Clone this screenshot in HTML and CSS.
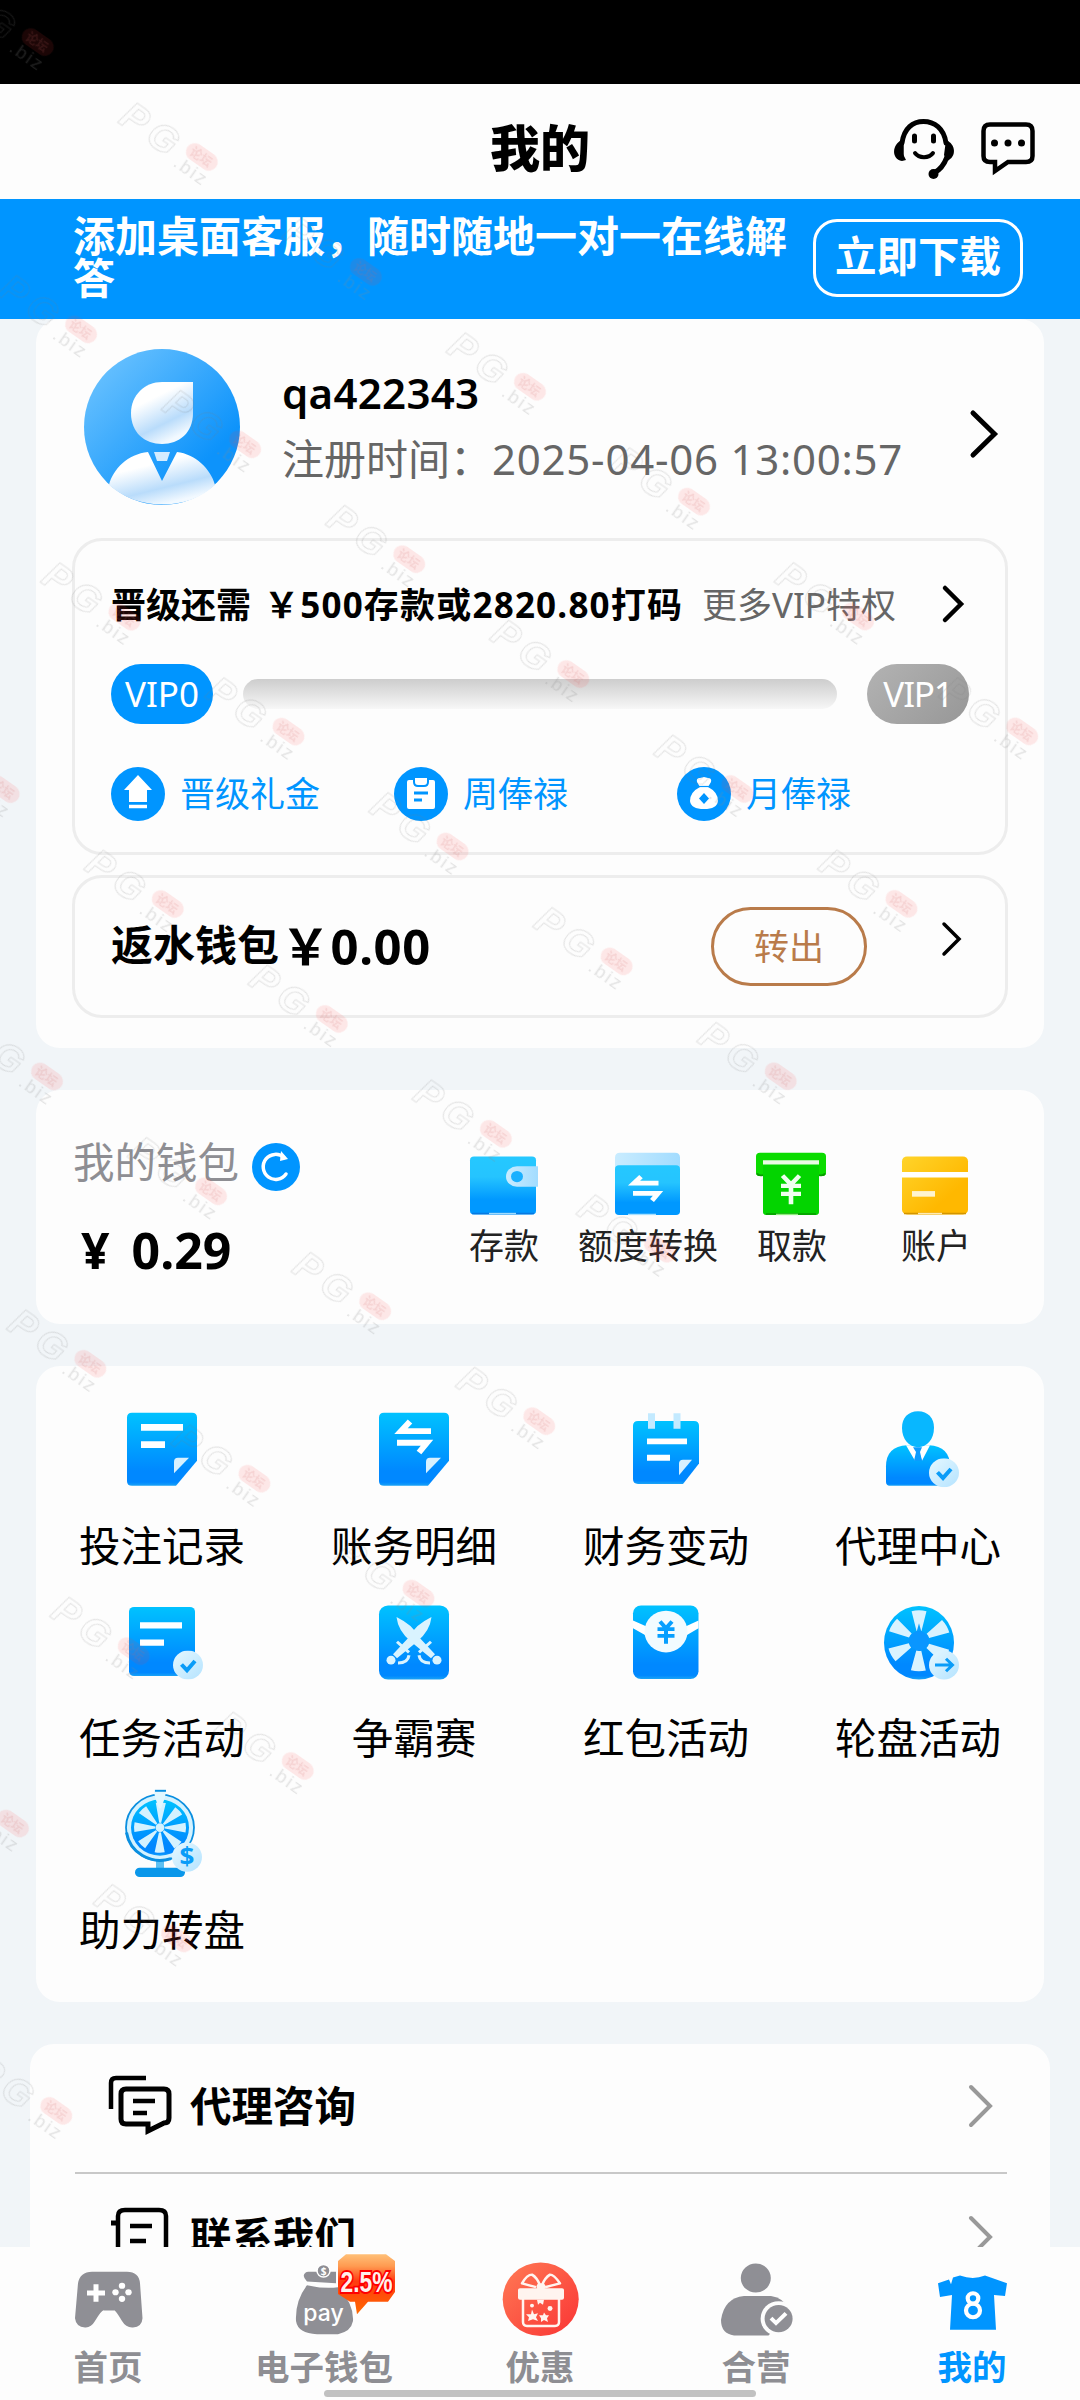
FILE: index.html
```html
<!DOCTYPE html>
<html lang="zh-CN">
<head>
<meta charset="utf-8">
<title>我的</title>
<link rel="stylesheet" href="styles.css">
</head>
<body>
<svg class="defs" width="0" height="0">
  <defs>
    <linearGradient id="blue" x1="0" y1="0" x2="0" y2="1"><stop offset="0" stop-color="#00c2ff"/><stop offset=".8" stop-color="#0088ff"/><stop offset=".95" stop-color="#0088ff"/><stop offset="1" stop-color="#1ba4f5"/></linearGradient>
    <linearGradient id="purse" x1="0" y1="0" x2="0" y2="1"><stop offset="0" stop-color="#25c8ff"/><stop offset=".35" stop-color="#25c4ff"/><stop offset=".75" stop-color="#0098ff"/><stop offset="1" stop-color="#0098ff"/></linearGradient>
    <linearGradient id="pale" x1="0" y1="0" x2="1" y2="1"><stop offset="0" stop-color="#e6f8ff"/><stop offset="1" stop-color="#b4e3ff"/></linearGradient>
    <linearGradient id="lid" x1="0" y1="0" x2="1" y2="0"><stop offset="0" stop-color="#c9ecff"/><stop offset="1" stop-color="#a2dcff"/></linearGradient>
    <linearGradient id="gold" x1="0" y1="0" x2="1" y2="1"><stop offset="0" stop-color="#ffd42a"/><stop offset=".7" stop-color="#ffb800"/></linearGradient>
    <linearGradient id="red" x1="0" y1="0" x2="1" y2="1"><stop offset="0" stop-color="#ff7a55"/><stop offset="1" stop-color="#fa3434"/></linearGradient>
    <linearGradient id="tag" x1="0" y1="0" x2="0" y2="1"><stop offset="0" stop-color="#ffc078"/><stop offset=".2" stop-color="#ff9a50"/><stop offset=".45" stop-color="#ff3a10"/><stop offset="1" stop-color="#ff6a00"/></linearGradient>
    <linearGradient id="face" x1="0" y1="0" x2="1" y2="1"><stop offset="0" stop-color="#76c8ff"/><stop offset=".75" stop-color="#0d93fb"/></linearGradient>
    <linearGradient id="skin" x1="0" y1="0" x2=".5" y2="1"><stop offset=".35" stop-color="#fff"/><stop offset=".75" stop-color="#b9dcfb"/><stop offset="1" stop-color="#f2f9ff"/></linearGradient>
    <symbol id="tick" viewBox="0 0 30 30"><circle cx="15" cy="15" r="15" fill="url(#pale)"/><path d="M8.500 14.500L14 20.500L22 11" fill="none" stroke="#0a9cf8" stroke-width="4"/></symbol>
  </defs>
</svg>
<div class="screen">
  <div class="status"></div>
  <header class="header">
    <h1>我的</h1>
    <div class="tools">
      <svg width="60" height="60" viewBox="0 0 60 60"><g fill="none" stroke="#000" stroke-linecap="round"><path d="M8 24C10 9 19 2.500 29.500 2.500S50 9 52 24" stroke-width="5"/><path d="M8 24V39" stroke-width="3.500"/><path d="M53 38C50 46 46 51 40 54" stroke-width="5"/><path d="M20.500 17v5M39.500 17v5" stroke-width="5"/><path d="M21 34C25 39.500 35 39.500 39 34" stroke-width="4"/></g><path d="M8 21C-2 25 -3 40 8 42L12 41L9 35ZM52 21C62 25 63 38 53 42L50 36Z"/><circle cx="39.500" cy="55" r="5"/></svg>
      <svg width="54" height="54" viewBox="0 0 54 54"><path d="M9 2.500H45Q51.500 2.500 51.500 9V34Q51.500 40 45 40H27L14 49V40H9Q2.500 40 2.500 34V9Q2.500 2.500 9 2.500Z" fill="none" stroke="#000" stroke-width="4.500"/><circle cx="13.500" cy="21" r="3.500"/><circle cx="27" cy="21" r="3.500"/><circle cx="40.500" cy="21" r="3.500"/></svg>
    </div>
  </header>
  <section class="banner">
    <p>添加桌面客服，随时随地一对一在线解答</p>
    <button class="download">立即下载</button>
  </section>

  <main class="content">
    <section class="card account">
      <div class="profile">
        <svg class="avatar" width="156" height="156" viewBox="0 0 156 156"><circle cx="78" cy="78" r="78" fill="url(#face)"/><path d="M78 33H109V64C109 84 95 95 78 95C61 95 47 84 47 64C47 46 61 33 78 33Z" fill="url(#skin)"/><path d="M64 103C44 105 29 120 25 136C54 162 104 162 131 136C127 120 111 105 93 103L78 132Z" fill="url(#skin)"/><path d="M70 103H86L83 112H73Z" fill="#d5ecff"/></svg>
        <div class="who"><div class="name">qa422343</div><div class="since">注册时间：<span class="date">2025-04-06 13:00:57</span></div></div>
        <svg class="arrow" width="28" height="48" viewBox="0 0 28 48"><path d="M3 3L24.500 24L3 45" fill="none" stroke="#000" stroke-width="5" stroke-linecap="round"/></svg>
      </div>
      <div class="panel vip">
        <div class="need"><b class="need-a">晋级还需</b><b class="need-b">￥500存款或2820.80打码</b><span class="more">更多VIP特权</span><svg width="22" height="38" viewBox="0 0 22 38"><path d="M3 3L19 19L3 35" fill="none" stroke="#000" stroke-width="4.500" stroke-linecap="round"/></svg></div>
        <div class="levels"><span class="pill">VIP0</span><span class="bar"></span><span class="pill off">VIP1</span></div>
        <div class="gifts">
          <div><svg width="54" height="54" viewBox="0 0 54 54"><circle cx="27" cy="27" r="27" fill="#0095ff"/><path d="M27 8L41 23H36V35H18V23H13Z" fill="#fff"/><path d="M18 39.500H36" stroke="#fff" stroke-width="3.500"/></svg>晋级礼金</div>
          <div><svg width="54" height="54" viewBox="0 0 54 54"><circle cx="27" cy="27" r="27" fill="#0095ff"/><rect x="13" y="13" width="28" height="29" rx="2" fill="#fff"/><path d="M20 10H34V15Q34 19 30 19H24Q20 19 20 15Z" fill="#fff" stroke="#0095ff" stroke-width="2"/><path d="M20 26H34M20 33H28" stroke="#0095ff" stroke-width="3"/></svg>周俸禄</div>
          <div><svg width="54" height="54" viewBox="0 0 54 54"><circle cx="27" cy="27" r="27" fill="#0095ff"/><path d="M23 20L20 15Q19 11 23 11L27 10L31 11Q35 11 34 15L31 20Q41 25 41 34Q40 42 27 42Q14 42 13 34Q13 25 23 20Z" fill="#fff"/><path d="M27 26L32 31.500L27 37L22 31.500Z" fill="#0095ff"/><path d="M22 19.500H32" stroke="#0095ff" stroke-width="1.200"/></svg>月俸禄</div>
        </div>
      </div>
      <div class="panel rebate">
        <b class="rebate-name">返水钱包</b><b class="rebate-sum">￥0.00</b>
        <button class="out">转出</button>
        <svg width="20" height="34" viewBox="0 0 20 34"><path d="M2 2L17 17L2 32" fill="none" stroke="#000" stroke-width="3.500" stroke-linecap="round"/></svg>
      </div>
    </section>

    <section class="card wallet">
      <div class="balance">
        <div class="balance-name">我的钱包<svg width="48" height="48" viewBox="0 0 48 48"><circle cx="24" cy="24" r="24" fill="#0095ff"/><path d="M34 31A12.500 12.500 0 1 1 32 14.500" fill="none" stroke="#fff" stroke-width="3.500" stroke-linecap="round"/><path d="M29 8L36 16L28 18Z" fill="#fff"/></svg></div>
        <div class="balance-sum"><span>¥</span><span>0.29</span></div>
      </div>
      <div class="quick">
        <div><svg width="76" height="72" viewBox="0 0 76 72"><rect x="4" y="8" width="66" height="62" rx="4" fill="url(#purse)"/><path d="M6 69H68" stroke="#0878e0" stroke-width="1.500"/><path d="M23 69H50" stroke="#9fdcff" stroke-width="1.500"/><path d="M51 18.500H72V40.500H51A11 11 0 0 1 51 18.500Z" fill="url(#lid)"/><circle cx="51" cy="29.500" r="6" fill="#1ab0ff"/></svg>存款</div>
        <div><svg width="76" height="72" viewBox="0 0 76 72"><path d="M5 20V9Q5 4 10 4H65Q70 4 70 9V20Z" fill="url(#lid)"/><rect x="5" y="17.500" width="65" height="53" rx="4" fill="url(#purse)"/><path d="M18 70H46" stroke="#a6e0ff" stroke-width="1.500"/><path d="M48.500 36.500H24L31 29.500M23 47.500H48L42 55" fill="none" stroke="#fff" stroke-width="5"/></svg>额度转换</div>
        <div><svg width="76" height="72" viewBox="0 0 76 72"><rect x="2" y="4" width="70" height="25" rx="4" fill="#0bdc00"/><path d="M3 26Q4 29 9 28M71 26Q70 29 65 28" fill="none" stroke="#089b00" stroke-width="2"/><rect x="9" y="16" width="56" height="54.500" rx="3" fill="#03d400"/><path d="M9 12H65V16.500H9Z" fill="#e9fbe5"/><path d="M12 69.500H62" stroke="#06a800" stroke-width="2"/><path d="M22 70H44" stroke="#8ded7c" stroke-width="1.500"/><path d="M28.500 28.500L37 38L45.500 28.500M27 39.500H47M27 48H47M37 38V59" fill="none" stroke="#effff0" stroke-width="4.600"/></svg>取款</div>
        <div><svg width="76" height="72" viewBox="0 0 76 72"><rect x="4" y="8" width="66" height="62" rx="5" fill="url(#gold)"/><path d="M6 69H68" stroke="#d29500" stroke-width="1.500"/><path d="M20 69H44" stroke="#ffeab0" stroke-width="1.500"/><path d="M4 27.500H70" stroke="#fff" stroke-width="6"/><path d="M14 48H37" stroke="#fff4ce" stroke-width="6"/></svg>账户</div>
      </div>
    </section>

    <section class="card menu">
      <div><svg width="90" height="96" viewBox="0 0 90 96"><path d="M15 10.500H75Q80 10.500 80 15.500V60L59 86H15Q10 86 10 81V15.500Q10 10.500 15 10.500Z" fill="url(#blue)"/><path d="M24 25.500H66M24 43.500H48" stroke="#fff" stroke-width="7"/><path d="M57 73V61Q57 57 61 57H72Z" fill="#d8f1ff"/></svg>投注记录</div>
      <div><svg width="90" height="96" viewBox="0 0 90 96"><path d="M15 10.500H75Q80 10.500 80 15.500V60L59 86H15Q10 86 10 81V15.500Q10 10.500 15 10.500Z" fill="url(#blue)"/><path d="M62 29.500H32L41 19.500M28 41.500H58L50 51.500" fill="none" stroke="#fff" stroke-width="6"/><path d="M57 73V61Q57 57 61 57H72Z" fill="#d8f1ff"/></svg>账务明细</div>
      <div><svg width="90" height="96" viewBox="0 0 90 96"><path d="M17 19H73Q78 19 78 24V63L62 84H17Q12 84 12 79V24Q12 19 17 19Z" fill="url(#blue)"/><path d="M30.500 11V27M56 11V27" stroke="#c3eaff" stroke-width="7"/><path d="M26 40H66M26 57H49" stroke="#fff" stroke-width="6"/><path d="M58 75V63Q58 59 62 59H71Z" fill="#d8f1ff"/></svg>财务变动</div>
      <div><svg width="90" height="96" viewBox="0 0 90 96"><path d="M13 82V66Q13 45 34 44H56Q77 45 77 66V86H18Q13 86 13 82Z" fill="url(#blue)"/><path d="M33 44L42 60L45 48L49 60L57 44Z" fill="#fff"/><path d="M40 46H49L47 51L49 60H41L43 51Z" fill="#0b9bff"/><path d="M45 9C55 9 61 16 61 26C61 38 54 46 45 46C36 46 29 38 29 26C29 16 35 9 45 9Z" fill="#08b7ff"/><use href="#tick" x="56" y="57.500" width="30" height="30"/></svg>代理中心</div>
      <div class="row-b"><svg width="90" height="96" viewBox="0 0 90 96"><rect x="12" y="19" width="66" height="71.500" rx="5" fill="url(#blue)"/><path d="M23 38H65M23 56H47" stroke="#fff" stroke-width="6.500"/><use href="#tick" x="56" y="64" width="30" height="30"/></svg>任务活动</div>
      <div class="row-b"><svg width="90" height="96" viewBox="0 0 90 96"><rect x="10" y="17.500" width="70" height="76.500" rx="9" fill="url(#blue)"/><g id="sword" fill="#d9f3ff" stroke="#d9f3ff"><path d="M27.500 29.500Q44 38 48 48L66 68L62 72L42 55Q29 44 27.500 29.500Z" stroke="none"/><path d="M50 69Q51 77 61 77M62 55L50 66" fill="none" stroke-width="3"/><circle cx="68" cy="74" r="4.500" stroke="none"/></g><use href="#sword" transform="matrix(-1 0 0 1 90 0)"/></svg>争霸赛</div>
      <div class="row-b"><svg width="90" height="96" viewBox="0 0 90 96"><rect x="12" y="17.500" width="65.500" height="76" rx="8" fill="url(#blue)"/><path d="M12 33L25 39Q33 35 45 35T65 39L77.500 33V41L66 48H24L12 41Z" fill="#fff"/><circle cx="45" cy="44.500" r="21.500" fill="#f2fbff"/><path d="M39 34L45 41L51 34M36.500 42H53.500M36.500 49H53.500M45 41V57" fill="none" stroke="#079fff" stroke-width="4"/></svg>红包活动</div>
      <div class="row-b"><svg width="90" height="96" viewBox="0 0 90 96"><ellipse cx="46" cy="56" rx="35" ry="38" fill="url(#blue)"/><circle cx="46" cy="54" r="21" fill="none" stroke="#d9f3ff" stroke-width="21" stroke-dasharray="10 11.990" transform="rotate(-103.600 46 54)"/><path d="M46 36L49 47H43Z" fill="#079fff"/><circle cx="46" cy="54" r="10" fill="#0a96ff"/><circle cx="71" cy="79" r="15" fill="url(#pale)"/><path d="M62 79H79M73 72.500L79.500 79L73 85.500" fill="none" stroke="#0a9cf8" stroke-width="3"/></svg>轮盘活动</div>
      <div class="row-c"><svg width="90" height="96" viewBox="0 0 90 96"><path d="M43 74V88" stroke="#5ec0f2" stroke-width="8"/><rect x="18" y="85.500" width="50" height="9.500" rx="4.700" fill="#0a97ea"/><circle cx="43" cy="44" r="34" fill="#d4f2ff" stroke="#0b8fe0" stroke-width="1.800"/><path d="M9.500 49A34 34 0 0 0 54 76" fill="none" stroke="#0b8fe0" stroke-width="3"/><circle cx="43" cy="44" r="29" fill="url(#blue)"/><circle cx="43" cy="44" r="15.500" fill="none" stroke="#d4f2ff" stroke-width="21" stroke-dasharray="6 6.174" transform="rotate(-11 43 44)"/><circle cx="43" cy="44" r="4.500" fill="#d4f2ff"/><path d="M37 5H49L48 13L44 24H42L38 13Z" fill="#e2f7ff"/><path d="M38 6H49" stroke="#0b8fe0" stroke-width="2"/><circle cx="70" cy="74.500" r="15" fill="url(#pale)"/><text class="dollar" x="70" y="83" text-anchor="middle">$</text></svg>助力转盘</div>
    </section>

    <section class="card links">
      <div class="link"><svg class="link-icon" width="66" height="62" viewBox="0 0 66 62"><path d="M3 34V8Q3 3 8 3H38" fill="none" stroke="#000" stroke-width="4.500"/><path d="M18 14H56Q61 14 61 19V43Q61 48 56 48L40 56V49H18Q13 49 13 44V19Q13 14 18 14Z" fill="none" stroke="#000" stroke-width="5"/><path d="M25 26H47M25 38H39" stroke="#000" stroke-width="4.500"/></svg><b>代理咨询</b><svg width="24" height="42" viewBox="0 0 24 42"><path d="M2 2L21 21L2 40" fill="none" stroke="#999" stroke-width="4" stroke-linecap="round"/></svg></div>
      <div class="link"><svg class="link-icon" width="66" height="62" viewBox="0 0 66 62"><path d="M17 4H51Q58 4 58 10V58H10V10Q10 4 17 4Z" fill="none" stroke="#000" stroke-width="4.500"/><path d="M3 17H10M3 44H10" stroke="#000" stroke-width="5"/><path d="M22 20H44M22 35H38" stroke="#000" stroke-width="4.500"/></svg><b>联系我们</b><svg width="24" height="42" viewBox="0 0 24 42"><path d="M2 2L21 21L2 40" fill="none" stroke="#999" stroke-width="4" stroke-linecap="round"/></svg></div>
    </section>
  </main>

  <nav class="nav">
    <div><svg width="80" height="80" viewBox="0 0 80 80"><path d="M24 15H59Q71 15 72 27L74.500 63Q74 72 65 72.500Q58 73 54 66Q47 54 46 55H36Q34 54 27 66Q23 73 17 72.500Q8 72 7 63L10 27Q12 15 24 15Z" fill="#8f8f95"/><path d="M19 37H37M28 28V46" stroke="#fff" stroke-width="5"/><g fill="#fff"><circle cx="54" cy="29.500" r="3.200"/><circle cx="54" cy="43" r="3.200"/><circle cx="47.500" cy="36.200" r="3.200"/><circle cx="60.500" cy="36.200" r="3.200"/></g></svg>首页</div>
    <div><svg width="80" height="80" viewBox="0 0 80 80"><path d="M24 15H52V27L23 25Q17 19 22 15.500ZM23 29Q40 33 54 31Q70 48 69 66Q67 77 54 79.500H33Q14 79 12 66Q11 45 23 29Z" fill="#8f8f95"/><circle cx="39.500" cy="14" r="6.500" fill="#8f8f95" stroke="#fff" stroke-width="1.500"/><text class="coin" x="39.500" y="18" text-anchor="middle">$</text><text class="pay" x="39.500" y="66" text-anchor="middle">pay</text><path d="M62 -4H100L109 4V34L102 45H86L73 59L68 44L54 36V4Z" fill="#fff"/><path d="M62 -3H102L111 4V36L104 46H84L73 59L71 46H66L54 38V4Z" fill="url(#tag)"/><text class="rate" x="82.500" y="36" text-anchor="middle" textLength="52" lengthAdjust="spacingAndGlyphs">2.5%</text></svg>电子钱包</div>
    <div><svg width="80" height="80" viewBox="0 0 80 80"><circle cx="40.700" cy="43.500" r="38" fill="url(#red)"/><g fill="none" stroke="#fff4ef" stroke-width="2.500" stroke-linejoin="round"><path d="M36 31L22 27Q27 18 32 18Q37 21 40 29M45 31L60 27Q54 18 50 18Q45 21 42 29"/><path d="M23 42V67Q23 71 27 71H55Q59 71 59 67V42"/></g><rect x="18" y="32" width="46" height="12" rx="2" fill="#fff4ef"/><ellipse cx="41" cy="30.500" rx="4.500" ry="3.500" fill="#fff4ef"/><path d="M32 54L34 59L38 58L36 62L38 66L33 64L28 66L29 62L26 59H31ZM44 57L46 60L49 60L47 63L48 67L44 65L41 67V63L39 60H43ZM37 44H44L43 49L40 47L38 49Z" fill="#fff4ef"/><circle cx="50" cy="53" r="2.500" fill="#fff4ef"/><circle cx="32" cy="50" r="2" fill="#fff4ef"/></svg>优惠</div>
    <div><svg width="80" height="80" viewBox="0 0 80 80"><circle cx="39.800" cy="21.500" r="15" fill="#8f8f95"/><path d="M28 40H55Q68 42 73 54V81H18Q5 79 5 65Q8 42 28 40Z" fill="#8f8f95"/><circle cx="62.600" cy="63.500" r="18" fill="#fdfdfd"/><path d="M54 79L74 66V82H52Z" fill="#fdfdfd"/><circle cx="62.600" cy="63.500" r="14" fill="#8f8f95"/><path d="M55 63L60 68L70 58" fill="none" stroke="#fff" stroke-width="4"/></svg>合营</div>
    <div class="active"><svg width="80" height="80" viewBox="0 0 80 80"><path d="M6 27L17 23L19 28L21 21L28 19Q41 24 53 19L75 27L73 40L62 39L64 75H18L20 39L8 41Z" fill="#0095ff"/><g fill="none" stroke="#fff" stroke-width="4.200"><circle cx="41" cy="42.500" r="5.300"/><circle cx="41" cy="55" r="7"/></g></svg>我的</div>
    <span class="home-bar"></span>
  </nav>

  <svg class="stamp" width="1080" height="2247" viewBox="0 0 1080 2247" aria-hidden="true">
    <defs><pattern id="mark" patternUnits="userSpaceOnUse" x="-610.900" y="-12" width="200.300" height="210.500">
      <g transform="translate(10 12)"><text class="stamp-pg" x="-3" y="25">PG</text><rect x="69" y="-4" width="35" height="18" rx="9" fill="#f33" fill-opacity=".11"/><text class="stamp-cn" x="74" y="10">论坛</text><text class="stamp-biz" x="67" y="29">.biz</text></g>
    </pattern></defs>
    <rect x="-610.900" y="-12" width="1402.100" height="1894.500" fill="url(#mark)" transform="translate(462 333) rotate(35)"/>
  </svg>
</div>
</body>
</html>
```
FILE: styles.css
```css
* { box-sizing: border-box; }
body { margin: 0; background: #f1f5f8; color: #000; font-family: "Noto Sans", "Noto Sans CJK SC", sans-serif; }
h1, p { margin: 0; }
button { margin: 0; padding: 0; background: none; font-family: inherit; }
svg { display: block; flex: none; overflow: visible; }
.defs { position: absolute; }
.screen { position: relative; width: 1080px; height: 2400px; overflow: hidden; display: flex; flex-direction: column; }
.status { height: 84px; background: #000; flex: none; }

.header { height: 115px; flex: none; background: #fdfdfd; display: grid; grid-template-columns: 1fr auto 1fr; align-items: center; }
.header h1 { grid-column: 2; padding-top: 12px; font-size: 50px; line-height: 60px; font-weight: 900; }
.tools { display: flex; justify-content: flex-end; align-items: center; gap: 27px; padding: 14px 45px 0 0; }

.banner { height: 120px; flex: none; background: #0095ff; color: #fff; display: flex; align-items: flex-start; padding: 16px 57px 0 73px; }
.banner p { width: 728px; margin-right: 12px; font-size: 42px; line-height: 42px; font-weight: 700; }
.download { margin-top: 4px; width: 210px; height: 78px; border: 3px solid #fff; border-radius: 24px; color: #fff; font-size: 41.500px; line-height: 68px; padding-bottom: 4px; font-weight: 700; }

.content { flex: 1; min-height: 0; overflow: hidden; padding: 0 36px; display: flex; flex-direction: column; gap: 42px; }
.card { flex: none; background: #fdfdfd; border-radius: 24px; }

.account { height: 729px; padding: 30px 37px 0; display: flex; flex-direction: column; }
.profile { height: 156px; display: flex; margin: 0 9px 33px 11px; align-items: center; }
.who { margin-left: 42px; flex: 1; white-space: nowrap; }
.name { font-size: 42px; line-height: 60px; font-weight: 600; letter-spacing: .3px; margin-top: -3px; }
.since { font-size: 42px; line-height: 60px; color: #666; margin-top: 6px; }
.date { letter-spacing: .75px; }
.arrow { margin-top: 14px; }
.panel { border: 3px solid #ededed; border-radius: 30px; margin: 0 -1px; padding: 0 36px; }
.vip { height: 317px; padding-top: 39px; margin-bottom: 20px; }
.need { display: flex; align-items: center; height: 50px; font-size: 35px; line-height: 50px; white-space: nowrap; }
.need svg { margin-bottom: 3px; }
.need-a { width: 153px; }
.need-b { width: 438px; letter-spacing: 1.200px; }
.more { width: 240px; color: #666; }
.levels { display: flex; align-items: center; justify-content: space-between; height: 60px; margin-top: 34px; }
.pill { width: 102px; height: 60px; border-radius: 30px; background: #0095ff; color: #fff; font-size: 35px; line-height: 59px; text-align: center; }
.pill.off { background: linear-gradient(135deg, #b3b3b3, #979797); letter-spacing: -1.200px; }
.bar { width: 594px; height: 30px; border-radius: 15px; background: linear-gradient(#cdcdcd, #f7f7f7); }
.gifts { display: flex; margin-top: 43px; color: #0095ff; font-size: 35px; line-height: 54px; }
.gifts div { width: 283px; display: flex; gap: 15px; }
.rebate { height: 143px; display: flex; align-items: center; white-space: nowrap; }
.rebate-name { font-size: 42px; width: 170px; margin-bottom: 8px; }
.rebate-sum { font-size: 49px; width: 430px; margin-bottom: 6px; letter-spacing: .6px; }
.out { width: 156px; height: 79px; border: 3px solid #b97b4a; border-radius: 40px; color: #b97b4a; font-size: 35px; padding-bottom: 4px; margin-right: 75px; }
.rebate svg { margin-bottom: 16px; }

.wallet { height: 234px; padding: 39px 36px 0 37px; display: flex; justify-content: space-between; }
.balance-name { display: flex; align-items: center; gap: 13px; height: 66px; font-size: 41.500px; line-height: 66px; color: #8e8e93; }
.balance-name svg { margin-top: 9px; }
.balance-sum { display: flex; gap: 22px; margin: 27px 0 0 8px; font-size: 50px; line-height: 56px; font-weight: 700; }
.quick { display: grid; grid-template-columns: repeat(4, 144px); margin-top: 20px; font-size: 35px; line-height: 50px; color: #222; }
.quick div { display: flex; flex-direction: column; align-items: center; white-space: nowrap; }
.quick svg { transform-origin: 0 0; transform: scaleY(.935); }

.menu { height: 636px; padding: 38px 0 0; display: grid; grid-template-columns: repeat(4, 252px); grid-auto-rows: 192px; font-size: 41.500px; line-height: 60px; }
.menu div { display: flex; flex-direction: column; align-items: center; gap: 16px; }
.menu svg { transform-origin: 0 0; transform: translateY(-1.400px) scaleY(.968); }
.menu .row-b svg { transform: translateY(-7.500px) scaleY(.968); }
.menu .row-c svg { transform: translateY(-3px) scaleY(.968); }

.links { margin: 0 -6px; padding: 0 43px 0 45px; height: 320px; }
.link { height: 130px; display: flex; align-items: center; padding: 0 14px 4px 33px; border-bottom: 2px solid #c8c8c8; }
.link + .link { border: 0; }
.link b { flex: 1; margin-left: 16px; font-size: 41.500px; line-height: 60px; }

.nav { position: relative; z-index: 2; height: 153px; flex: none; background: #fdfdfd; display: grid; grid-template-columns: repeat(5, 216px); padding-top: 11px; font-size: 34.500px; line-height: 50px; font-weight: 700; color: #8e8e93; }
.nav div { display: flex; flex-direction: column; align-items: center; gap: 4px; }
.nav svg { transform-origin: 0 0; transform: translateY(-.8px) scaleY(.968); }
.nav .active { color: #0095ff; }
.home-bar { position: absolute; left: 324px; bottom: 3px; width: 432px; height: 7px; border-radius: 4px; background: #c1c1c1; }

.dollar { font: 700 26px "Noto Sans", sans-serif; fill: #0a9cf8; }
.coin { font: 700 10px "Noto Sans", sans-serif; fill: #fff; }
.pay { font: 500 23px Inter, sans-serif; fill: #fff; }
.rate { font: 700 31px "Liberation Sans", sans-serif; fill: #fff0ec; stroke: #f00; stroke-width: 4px; paint-order: stroke; }

.stamp { position: absolute; left: 0; top: 0; pointer-events: none; }
.stamp-pg { font: italic 700 38px "Liberation Sans", sans-serif; letter-spacing: 7px; fill: none; stroke: #777; stroke-opacity: .2; stroke-width: 1px; }
.stamp-cn { font: 700 12px "Noto Sans CJK SC", sans-serif; fill: #c66; fill-opacity: .16; }
.stamp-biz { font: 19px "Liberation Sans", sans-serif; letter-spacing: 2px; fill: #888; fill-opacity: .22; }
```
